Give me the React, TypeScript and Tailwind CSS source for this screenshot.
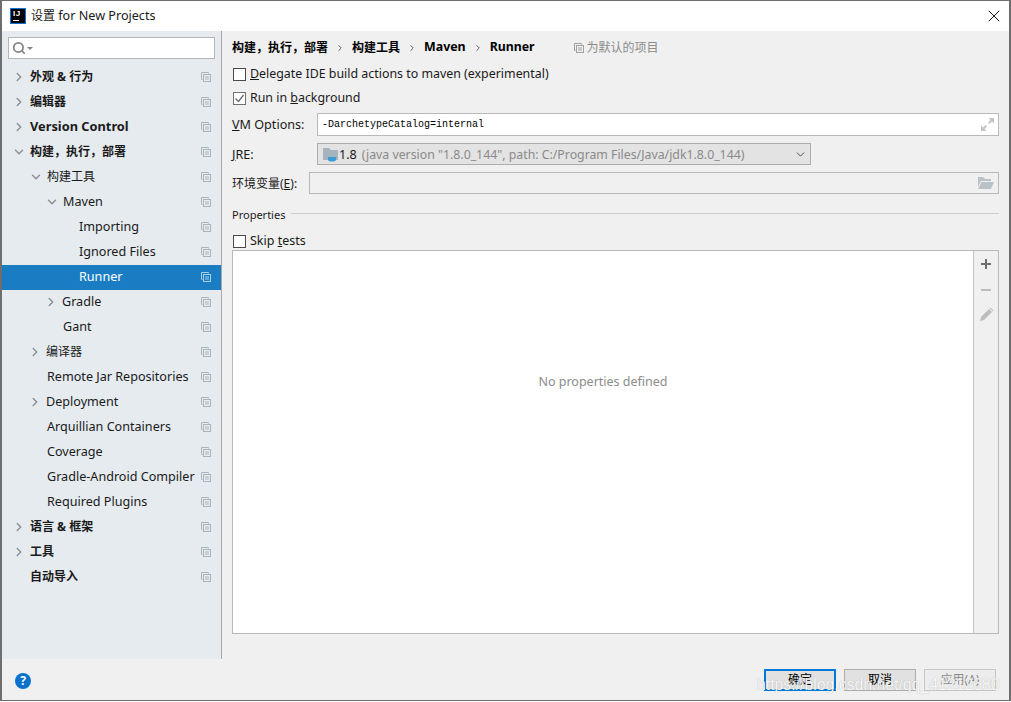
import { ChevronDown, ChevronRight, Search, X } from 'lucide-react';

const SANS = "font-['Noto_Sans','Noto_Sans_CJK_SC',sans-serif]";

const CopyIcon = ({ color = '#a9b4bd' }: { color?: string }) => (
  <svg width="10" height="10" viewBox="0 0 10 10" fill="none" stroke={color} strokeWidth="1" className="shrink-0">
    <path d="M1.5 7.5h-1v-7h7v1" />
    <rect x="2.5" y="2.5" width="7" height="7" />
    <path d="M4 5h4M4 7h4" />
  </svg>
);

interface TreeRow {
  label: string;
  indent: number;
  arrow?: 'right' | 'down';
  bold?: boolean;
  selected?: boolean;
  cjk?: boolean;
}

const rows: TreeRow[] = [
  { label: '外观 & 行为', indent: 28, arrow: 'right', bold: true, cjk: true },
  { label: '编辑器', indent: 28, arrow: 'right', bold: true, cjk: true },
  { label: 'Version Control', indent: 28, arrow: 'right', bold: true },
  { label: '构建，执行，部署', indent: 28, arrow: 'down', bold: true, cjk: true },
  { label: '构建工具', indent: 45, arrow: 'down', cjk: true },
  { label: 'Maven', indent: 61, arrow: 'down' },
  { label: 'Importing', indent: 77 },
  { label: 'Ignored Files', indent: 77 },
  { label: 'Runner', indent: 77, selected: true },
  { label: 'Gradle', indent: 60, arrow: 'right' },
  { label: 'Gant', indent: 61 },
  { label: '编译器', indent: 44, arrow: 'right', cjk: true },
  { label: 'Remote Jar Repositories', indent: 45 },
  { label: 'Deployment', indent: 44, arrow: 'right' },
  { label: 'Arquillian Containers', indent: 45 },
  { label: 'Coverage', indent: 45 },
  { label: 'Gradle-Android Compiler', indent: 45 },
  { label: 'Required Plugins', indent: 45 },
  { label: '语言 & 框架', indent: 28, arrow: 'right', bold: true, cjk: true },
  { label: '工具', indent: 28, arrow: 'right', bold: true, cjk: true },
  { label: '自动导入', indent: 28, bold: true, cjk: true },
];

const Tree = () => (
  <div className="mt-[6px]">
    {rows.map((row) => (
      <div
        key={row.label}
        className={`relative flex h-[25px] items-center pr-[10px] ${row.cjk ? 'text-[12px]' : row.bold ? 'text-[12.8px]' : 'text-[12.6px]'} ${row.selected ? 'bg-[#1a7dc4] text-white' : 'text-[#1a1a1a]'} ${row.bold ? 'font-bold' : ''}`}
      >
        <div
          className={`flex-1 truncate ${row.bold || row.cjk ? 'pb-[2px]' : ''}`}
          style={{ paddingLeft: row.indent }}
        >
          {row.label}
        </div>
        {row.arrow === 'right' && (
          <ChevronRight
            size={14}
            strokeWidth={2.5}
            className="absolute mt-[-1px] text-[#8f8f8f]"
            style={{ left: row.indent - 18 }}
          />
        )}
        {row.arrow === 'down' && (
          <ChevronDown
            size={14}
            strokeWidth={2.5}
            className="absolute mt-[-1px] text-[#8f8f8f]"
            style={{ left: row.indent - 18 }}
          />
        )}
        <div className="mb-[2px]">
          <CopyIcon color={row.selected ? '#a8cde8' : '#a9b4bd'} />
        </div>
      </div>
    ))}
  </div>
);

const Checkbox = ({ checked }: { checked?: boolean }) => (
  <div
    className={`ml-[1px] flex h-[13px] w-[13px] shrink-0 items-center justify-center border bg-white ${checked ? 'border-[#707070]' : 'border-[#4a4a4a]'}`}
  >
    {checked && (
      <svg width="11" height="11" viewBox="0 0 11 11" fill="none" stroke="#6a6a6a" strokeWidth="1.3">
        <path d="M1.5 5.5l3 3 5-6.5" />
      </svg>
    )}
  </div>
);

const Button = ({ label, primary, disabled }: { label: string; primary?: boolean; disabled?: boolean }) => (
  <div
    className={`flex h-[22px] w-[72px] items-center justify-center text-[12px] ${
      primary
        ? 'border-2 border-[#0078d7] bg-[#e1e1e1] text-black'
        : disabled
          ? 'border border-[#c8c8c8] bg-[#ececec] text-[#8a8a8a]'
          : 'border border-[#adadad] bg-[#e1e1e1] text-black'
    }`}
  >
    {label}
  </div>
);

export default function App() {
  return (
    <div className={`relative h-[702px] w-[1011px] overflow-hidden bg-white ${SANS}`}>
      <div className="flex h-[701px] w-[1011px] flex-col border-x-2 border-t border-b border-[#6e6e6e] bg-[#f0f0f0]">
        {/* title bar */}
        <div className="flex h-[30px] shrink-0 items-center bg-white pl-[8px] pr-[5px]">
          <div className="flex h-[16px] w-[16px] flex-col border border-[#0a78d2] bg-black px-[2px] pt-[1px]">
            <div className="font-['Liberation_Sans',sans-serif] text-[8px] leading-[8px] font-bold tracking-[0.5px] text-white">
              IJ
            </div>
            <div className="mt-[2px] h-[1px] w-[6px] bg-white" />
          </div>
          <span className="ml-[5px] text-[12.6px] text-[#1a1a1a]">
            <span className="text-[12px]">设置</span> for New Projects
          </span>
          <X size={20} strokeWidth={1.1} className="ml-auto text-black" />
        </div>

        <div className="flex min-h-0 flex-1">
          {/* sidebar */}
          <div className="w-[220px] shrink-0 border-r border-[#a8a8a8] bg-[#e6ebf0] pt-[6px]">
            <div className="mx-[6px] flex h-[22px] items-center border border-[#b5b5b5] bg-white pl-[3px]">
              <Search size={14} strokeWidth={3} className="text-[#858585]" />
              <div className="ml-[1px] h-0 w-0 border-x-[3px] border-t-[3px] border-x-transparent border-t-[#858585]" />
            </div>
            <Tree />
          </div>

          {/* main */}
          <div className="flex min-w-0 flex-1 flex-col pl-[10px] pr-[10px] pt-[9px] text-[12.5px] text-[#1a1a1a]">
            <div className="flex h-[15px] items-center text-[12px] font-bold text-black">
              <span>构建，执行，部署</span>
              <ChevronRight size={10} strokeWidth={2} className="mx-[7px] text-[#444]" />
              <span>构建工具</span>
              <ChevronRight size={10} strokeWidth={2} className="mx-[7px] text-[#444]" />
              <span className="text-[12.4px]">Maven</span>
              <ChevronRight size={10} strokeWidth={2} className="mx-[7px] text-[#444]" />
              <span className="text-[12.3px]">Runner</span>
              <span className="ml-[39px] flex items-center gap-[3px] font-normal text-[#8c8c8c]">
                <CopyIcon color="#a0a0a0" />
                为默认的项目
              </span>
            </div>

            <div className="mt-[12px] flex h-[14px] items-center gap-[4px] text-[12.4px]">
              <Checkbox />
              <span>
                <u>D</u>elegate IDE build actions to maven (experimental)
              </span>
            </div>
            <div className="mt-[10px] flex h-[14px] items-center gap-[4px] text-[12.4px]">
              <Checkbox checked />
              <span>
                Run in <u>b</u>ackground
              </span>
            </div>

            <div className="mt-[8px] flex h-[23px] items-center">
              <span className="w-[85px] shrink-0 pt-[2px] text-[12.6px]">
                <u>V</u>M Options:
              </span>
              <div className="flex h-full flex-1 items-center border border-[#b9b9b9] bg-white pl-[4px] pr-[4px] font-['Liberation_Mono',monospace] text-[10px] text-black">
                <span className="flex-1">-DarchetypeCatalog=internal</span>
                <svg width="13" height="13" viewBox="0 0 13 13" fill="#c4c4c4">
                  <path d="M13 0v5.5l-2-2-2.500 2.500-1.500-1.500 2.500-2.500-2-2zM0 13V7.500l2 2 2.500-2.500 1.500 1.500-2.500 2.500 2 2z" />
                </svg>
              </div>
            </div>

            <div className="mt-[7px] flex h-[22px] items-center">
              <span className="w-[85px] shrink-0 pt-[2px] text-[12.6px]">
                <u>J</u>RE:
              </span>
              <div className="flex h-full w-[494px] items-center border border-[#adadad] bg-[#e3e3e3] pl-[5px] pr-[3px]">
                <svg width="15" height="15" viewBox="0 0 15 15" className="shrink-0">
                  <path d="M0 1h6l2 2h7v10H0z" fill="#a7b4bf" />
                  <path d="M5 10h8v2a2.500 2.500 0 0 1-2.500 2.500h-3A2.500 2.500 0 0 1 5 12z" fill="#3a9bd6" />
                </svg>
                <span className="ml-[1px] pt-[2px] text-[12.6px] text-[#1a1a1a]">1.8</span>
                <span className="ml-[5px] flex-1 truncate pt-[2px] text-[12.3px] text-[#8a8a8a]">
                  (java version "1.8.0_144", path: C:/Program Files/Java/jdk1.8.0_144)
                </span>
                <ChevronDown size={13} strokeWidth={1.6} className="text-[#333]" />
              </div>
            </div>

            <div className="mt-[7px] flex h-[22px] items-center">
              <span className="w-[77px] shrink-0 pt-[2px] text-[12px]">
                环境变量(<u>E</u>):
              </span>
              <div className="flex h-full flex-1 items-center justify-end border border-[#b9b9b9] bg-[#f0f0f0] pr-[4px]">
                <svg width="16" height="12" viewBox="0 0 16 12" fill="#b9c2c9">
                  <path d="M0 0h5l2 2h6v2H3L0 10zM3.500 5H16l-3 7H0z" />
                </svg>
              </div>
            </div>

            <div className="mt-[12px] flex h-[18px] items-center">
              <span className="text-[11px]">Properties</span>
              <div className="mb-[4px] ml-[6px] h-px flex-1 bg-[#cdcdcd]" />
            </div>

            <div className="mt-[10px] flex h-[14px] items-center gap-[4px]">
              <Checkbox />
              <span>
                Skip <u>t</u>ests
              </span>
            </div>

            <div className="mt-[2px] flex h-[384px] border border-[#b9b9b9] bg-white">
              <div className="flex flex-1 items-start justify-center pt-[122px] text-[#8c8c8c]">
                No properties defined
              </div>
              <div className="flex w-[25px] flex-col items-center gap-[10px] border-l border-[#c4c4c4] bg-[#f0f0f0] pt-[5px]">
                <svg width="16" height="16" viewBox="0 0 16 16" fill="#6e6e6e">
                  <path d="M7 3h2v4h4v2H9v4H7V9H3V7h4z" />
                </svg>
                <svg width="16" height="16" viewBox="0 0 16 16" fill="#bdbdbd">
                  <path d="M3 7h10v2H3z" />
                </svg>
                <svg width="16" height="16" viewBox="0 0 16 16" fill="#bdbdbd" className="mt-[-1px]">
                  <path d="M11 2l3 3-8 8-4 1 1-4zM11.500 1l1-.5 3 3-.5 1z" />
                </svg>
              </div>
            </div>
          </div>
        </div>

        {/* footer */}
        <div className="flex h-[41px] shrink-0 items-center pl-[13px] pr-[13px]">
          <div className="mt-[2px] flex h-[16px] w-[16px] items-center justify-center rounded-full bg-[#0a72cc] text-[12px] font-bold text-white">
            ?
          </div>
          <div className="ml-auto flex gap-[8px]">
            <Button label="确定" primary />
            <Button label="取消" />
            <Button label="应用(A)" disabled />
          </div>
        </div>
      </div>

      {/* csdn watermark */}
      <div className="absolute left-[757px] top-[673px] font-['Liberation_Sans',sans-serif] text-[15.800px] whitespace-nowrap text-white/90 [text-shadow:0_0_1px_rgba(120,120,120,0.6)]">
        https://blog.csdn.net/qq_41212680
      </div>
    </div>
  );
}
